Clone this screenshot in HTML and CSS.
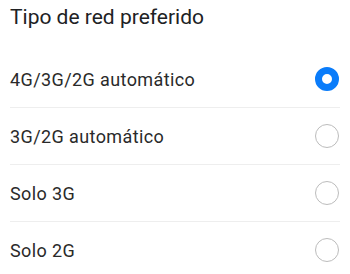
FILE: index.html
```html
<!DOCTYPE html>
<html lang="es">
<head>
<meta charset="utf-8">
<title>Tipo de red preferido</title>
<link rel="stylesheet" href="styles.css">
</head>
<body>
<div class="dialog">
  <h1 class="title">Tipo de red preferido</h1>
  <ul class="options">
    <li class="option"><span class="label">4G/3G/2G automático</span><span class="radio selected"></span></li>
    <li class="option"><span class="label">3G/2G automático</span><span class="radio"></span></li>
    <li class="option"><span class="label">Solo 3G</span><span class="radio"></span></li>
    <li class="option"><span class="label">Solo 2G</span><span class="radio"></span></li>
  </ul>
</div>
</body>
</html>
```

FILE: styles.css
```css
html, body {
  margin: 0;
  padding: 0;
  background: #ffffff;
}
body {
  font-family: Roboto, "Noto Sans", sans-serif;
  color: #212121;
}
.dialog {
  width: 330px;
  padding: 0 10px;
}
.title {
  margin: 0;
  height: 51px;
  box-sizing: border-box;
  padding-top: 2px;
  font-size: 21px;
  line-height: 30px;
  font-weight: 400;
  color: #202124;
}
.options {
  list-style: none;
  margin: 0;
  padding: 0;
}
.option {
  display: flex;
  align-items: center;
  justify-content: space-between;
  height: 56px;
  border-bottom: 1px solid #eeeeee;
  font-size: 18px;
  letter-spacing: 0.4px;
  color: #2a2a2a;
}
.option:last-child {
  border-bottom: none;
}
.label {
  padding-top: 1px;
}
.radio {
  width: 24px;
  height: 24px;
  box-sizing: border-box;
  border-radius: 50%;
  border: 1px solid #bcbcbc;
  margin-right: 1px;
}
.radio.selected {
  border: 7px solid #0a7cfa;
}
```
